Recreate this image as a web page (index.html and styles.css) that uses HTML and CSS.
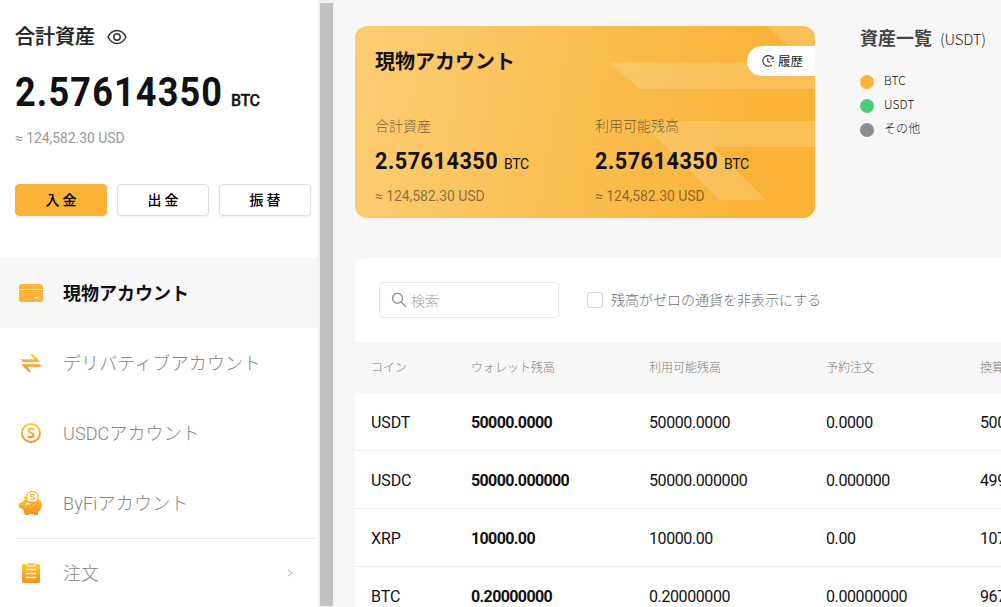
FILE: index.html
```html
<!DOCTYPE html>
<html lang="ja">
<head>
<meta charset="utf-8">
<title>合計資産</title>
<link rel="stylesheet" href="styles.css">
</head>
<body>
<div class="app">
  <aside class="sidebar">
    <section class="total">
      <div class="total-title"><span>合計資産</span>
        <svg class="eye" viewBox="0 0 20 16" width="20" height="16" fill="none" stroke="#333" stroke-width="1.5"><path d="M1 8C3 4 6.200 1.500 10 1.500S17 4 19 8C17 12 13.800 14.500 10 14.500S3 12 1 8Z"/><circle cx="10" cy="8" r="3.200"/></svg>
      </div>
      <div class="total-amount"><span class="big">2.57614350</span><span class="unit">BTC</span></div>
      <div class="total-usd">≈ 124,582.30 USD</div>
      <div class="actions">
        <button class="btn primary">入金</button>
        <button class="btn">出金</button>
        <button class="btn">振替</button>
      </div>
    </section>
    <nav class="menu">
      <svg class="defs" width="0" height="0"><defs><linearGradient id="gold" x1="0" y1="0" x2="0" y2="1"><stop offset="0" stop-color="#fbc82d"/><stop offset="1" stop-color="#f78e26"/></linearGradient></defs></svg>
      <a class="item active"><svg viewBox="0 0 24 24" width="24" height="24"><rect y="3" width="24" height="18" rx="2.500" fill="#fab438"/><path d="M0 8.500H24" stroke="#fff3dc" stroke-width="1"/><path d="M15.500 16.700H19" stroke="#fff3dc" stroke-width="1.500" stroke-linecap="round"/></svg><span>現物アカウント</span></a>
      <a class="item"><svg viewBox="0 0 24 24" width="24" height="24" fill="url(#gold)"><path d="M11 3H13.500L21.500 11H3V9.500L.5 8.200H15.500Z M2 13.300H20.500L23 15.800H8.500L12 21H10L2 13.300Z"/></svg><span class="derivatives">デリバティブアカウント</span></a>
      <a class="item"><svg viewBox="0 0 24 24" width="24" height="24"><circle cx="12" cy="12" r="9" fill="none" stroke="url(#gold)" stroke-width="2"/><path d="M15 8.800C14 7.400 9.600 7.200 9.600 9.700C9.600 12 14.600 11.300 14.600 14C14.600 16.700 10 16.500 8.900 15" fill="none" stroke="url(#gold)" stroke-width="2"/></svg><span class="usdc">USDCアカウント</span></a>
      <a class="item"><svg viewBox="0 0 24 24" width="24" height="24"><path d="M5 5L9 7H18C21 8.500 23 11 23 14C23 17 21 19.500 19 21V24H14.500V23H10V24H6L4.500 19.500L2.500 17.500L0 16.500V12.500L2.500 11.500L5.500 9Z" fill="url(#gold)"/><circle cx="13.300" cy="6.200" r="5.800" fill="#fff" stroke="#fbbf30" stroke-width="1.300"/><path d="M7 10.500H20V13H7Z" fill="#f9ad2c"/><path d="M15.200 4.300C14.500 3.100 11.500 3 11.500 4.700C11.500 6.200 15.200 5.600 15.200 7.300C15.200 9 12 8.800 11.400 7.900" fill="none" stroke="#fab030" stroke-width="1.400"/><path d="M6.800 14.300C7 11.800 10 11.800 10.300 13.800" fill="none" stroke="#fff" stroke-width="1.300"/></svg><span class="byfi">ByFiアカウント</span></a>
      <div class="rule"></div>
      <a class="item last"><svg viewBox="0 0 24 24" width="24" height="24"><rect x="3" y="3" width="18" height="19" rx="1.500" fill="url(#gold)"/><path d="M8 2V5H16V2" fill="#fbc64e" stroke="#fff0c5" stroke-width="1"/><path d="M7 8.500H17M7 12.500H17M7 16.500H17" stroke="#fff8e5" stroke-width="1.300"/></svg><span>注文</span>
        <svg class="chev" viewBox="0 0 6 8" width="6" height="8" fill="none" stroke="#aaa" stroke-width="1"><path d="M1 1L5 4L1 7"/></svg></a>
    </nav>
  </aside>
  <div class="scrollbar"><div class="thumb"></div></div>
  <main class="main">
    <div class="top">
      <section class="card">
        <svg class="card-art" viewBox="0 0 460 192" width="460" height="192"><g fill="#fff" fill-opacity=".16"><path d="M412 0H460V48Z"/><path d="M255 36.500H460V63H285Z"/><path d="M285 95H460V121H358L411 174H364Z"/></g></svg>
        <div class="card-head"><h2>現物アカウント</h2>
          <a class="history"><svg viewBox="0 0 12 12" width="12" height="12" fill="none" stroke="#333" stroke-width="1.100"><path d="M9.700 2A5.300 5.300 0 1 0 9.800 9.800M8.500 3.800H11V1.300M5.800 3V6.500L8.300 7.500M11.200 6V7"/></svg><span>履歴</span></a>
        </div>
        <div class="balances">
          <div class="balance"><div class="label">合計資産</div><div class="value"><b>2.57614350</b><span>BTC</span></div><div class="usd">≈ 124,582.30 USD</div></div>
          <div class="balance"><div class="label">利用可能残高</div><div class="value"><b>2.57614350</b><span>BTC</span></div><div class="usd">≈ 124,582.30 USD</div></div>
        </div>
      </section>
      <section class="assets">
        <div class="assets-title"><b>資産一覧</b><span>(USDT)</span></div>
        <div class="legend"><i class="dot btc"></i><span>BTC</span></div>
        <div class="legend"><i class="dot usdt"></i><span>USDT</span></div>
        <div class="legend"><i class="dot other"></i><span>その他</span></div>
      </section>
    </div>
    <section class="panel">
      <div class="filters">
        <div class="search"><svg viewBox="0 0 16 16" width="16" height="16" fill="none" stroke="#999" stroke-width="1.500"><circle cx="6.500" cy="6.300" r="5"/><path d="M10.200 10L15 14.700"/></svg><span>検索</span></div>
        <label class="check"><i class="box"></i><span>残高がゼロの通貨を非表示にする</span></label>
      </div>
      <div class="row head"><span>コイン</span><span>ウォレット残高</span><span>利用可能残高</span><span>予約注文</span><span>換算</span></div>
      <div class="row"><span>USDT</span><b>50000.0000</b><span>50000.0000</span><span>0.0000</span><span>500</span></div>
      <div class="row"><span>USDC</span><b>50000.000000</b><span>50000.000000</span><span>0.000000</span><span>499</span></div>
      <div class="row"><span>XRP</span><b>10000.00</b><span>10000.00</span><span>0.00</span><span>107</span></div>
      <div class="row"><span>BTC</span><b>0.20000000</b><span>0.20000000</span><span>0.00000000</span><span>967</span></div>
    </section>
  </main>
</div>
</body>
</html>
```
FILE: styles.css
```css
* { box-sizing: border-box; }
body { margin: 0; width: 1001px; height: 607px; overflow: hidden; background: #fff; color: #121214; font-family: Roboto, "Noto Sans CJK JP", sans-serif; }
.app { display: flex; height: 607px; overflow: hidden; }
.sidebar { flex: 0 0 318px; }
.total { height: 258px; padding: 21px 0 0 15px; }
.total-title { display: flex; align-items: center; gap: 12px; height: 32px; font-size: 20px; line-height: 32px; font-weight: 500; color: #222; -webkit-text-stroke: .2px; }
.total-amount { display: flex; align-items: baseline; height: 62px; padding-top: 8px; line-height: 62px; white-space: nowrap; }
.big { font-size: 41px; font-weight: 700; letter-spacing: 1.300px; width: 216px; transform: scaleX(.88); transform-origin: 0 0; }
.unit { font-size: 16px; font-weight: 500; letter-spacing: -.4px; -webkit-text-stroke: .3px; }
.total-usd { margin-top: 13px; height: 20px; line-height: 20px; font-size: 14px; color: #999; letter-spacing: -.08px; }
.actions { display: flex; gap: 10px; margin-top: 36px; }
.btn { width: 92px; height: 32px; padding: 0 0 0 3px; border: 1px solid #ddd; border-radius: 4px; background: #fff; box-shadow: 0 1px 2px #0001; font: 500 14px/30px Roboto, "Noto Sans CJK JP", sans-serif; letter-spacing: 3px; color: #000; }
.primary { background: #fab337; border-color: #fab337; }
.defs { position: absolute; }
.item { display: flex; align-items: center; height: 70px; padding-left: 19px; gap: 20px; font-size: 18px; font-weight: 300; color: #858585; white-space: nowrap; }
.item svg { flex: none; }
.item span { padding-bottom: 2px; }
.active { background: #f7f7f7; color: #121214; font-weight: 700; }
.derivatives { letter-spacing: .12px; }
.usdc { letter-spacing: .1px; }
.byfi { letter-spacing: .2px; }
.rule { height: 1px; margin: 0 2px 0 16px; background: #e8e8e8; }
.last { height: 68px; }
.chev { margin-left: 168px; }
.scrollbar { flex: 0 0 17px; padding: 3px 2px 1px; background: #f1f1f1; }
.thumb { height: 603px; background: #c1c1c1; }
.main { flex: 1; min-width: 0; overflow: hidden; padding: 26px 0 0 20px; background: #f7f7f7; }
.top { display: flex; height: 232px; }
.card { position: relative; width: 460px; height: 192px; flex: none; border-radius: 12px; overflow: hidden; padding-left: 20px; background: linear-gradient(100deg, #fccd74, #fab337 85%); }
.card-art { position: absolute; left: 0; top: 0; }
.card-head, .balances { position: relative; display: flex; }
.card-head { justify-content: space-between; height: 89px; padding-top: 20px; }
.card h2 { margin: 0; font-size: 20px; line-height: 32px; font-weight: 700; }
.history { display: flex; align-items: center; gap: 4px; width: 68px; height: 30px; padding-left: 15px; background: #fff; border-radius: 15px 0 0 15px; font-size: 12.500px; color: #222; }
.history span { padding-bottom: 2px; }
.balance { width: 220px; }
.label { height: 22px; line-height: 22px; font-size: 14px; font-weight: 300; color: #12121499; }
.value { display: flex; align-items: baseline; gap: 6px; height: 46px; line-height: 48px; }
.value b { width: 123px; font-size: 24px; letter-spacing: .6px; transform: scaleX(.9); transform-origin: 0 0; }
.value span { font-size: 14px; letter-spacing: -.3px; }
.usd { height: 26px; line-height: 26px; font-size: 14px; letter-spacing: -.08px; color: #12121480; }
.assets { padding-left: 45px; white-space: nowrap; }
.assets-title { display: flex; align-items: baseline; gap: 8px; height: 43px; line-height: 26px; color: #444; }
.assets-title b { font-size: 18px; }
.assets-title span { font: 300 15px/26px "Noto Sans CJK JP", sans-serif; color: #222; letter-spacing: -.2px; }
.legend { display: flex; height: 24px; gap: 10px; font: 300 12px/22px "Noto Sans CJK JP", sans-serif; color: #111; letter-spacing: .1px; }
.dot { width: 14px; height: 14px; margin-top: 6px; border-radius: 50%; }
.btc { background: #fcb434; }
.usdt { background: #4bce7b; }
.other { background: #8c8c92; }
.panel { width: 820px; height: 360px; border-radius: 8px 0 0 0; background: #fff; overflow: hidden; }
.filters { display: flex; align-items: center; height: 84px; padding-left: 24px; gap: 28px; font-size: 14px; font-weight: 300; color: #707070; }
.search { display: flex; align-items: center; gap: 4px; width: 180px; height: 36px; padding-left: 11px; border: 1px solid #e8e8e8; border-radius: 4px; color: #a5a5a5; }
.search svg { width: 16px; }
.check { display: flex; align-items: center; gap: 8px; }
.check span { padding-bottom: 2px; }
.box { width: 16px; height: 16px; border: 1px solid #d5d5d5; border-radius: 3px; }
.row { display: grid; grid-template-columns: 100px 178px 177px 154px 150px; align-items: center; height: 58px; padding: 2px 0 0 16px; border-bottom: 1px solid #eee; font-size: 16px; letter-spacing: -.4px; }
.row b { letter-spacing: -.62px; }
.row span:first-child { letter-spacing: -.1px; }
.head { height: 51px; padding: 0 0 3px 16px; background: #f7f7f7; border: 0; color: #808080; font-size: 12px; font-weight: 300; letter-spacing: 0; }
.head span, .head span:first-child { letter-spacing: 0; }
```
